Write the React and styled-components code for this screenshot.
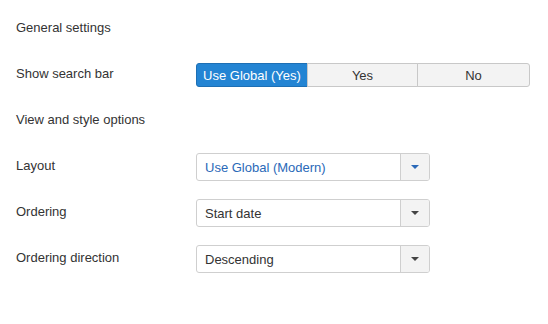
import styled, { createGlobalStyle } from "styled-components";

const GlobalStyle = createGlobalStyle`
  body {
    margin: 0;
    background: #fff;
    font-family: "Liberation Sans", Arial, sans-serif;
    font-size: 13px;
    color: #333;
  }
`;

const App = () => {
  return (
    <Page>
      <GlobalStyle />
      <Row>
        <Label>General settings</Label>
      </Row>
      <Row>
        <Label>Show search bar</Label>
        <Toggle>
          <ToggleButton $active>Use Global (Yes)</ToggleButton>
          <ToggleButton>Yes</ToggleButton>
          <ToggleButton>No</ToggleButton>
        </Toggle>
      </Row>
      <Row>
        <Label>View and style options</Label>
      </Row>
      <Row>
        <Label>Layout</Label>
        <Select $global value="Use Global (Modern)" />
      </Row>
      <Row>
        <Label>Ordering</Label>
        <Select value="Start date" />
      </Row>
      <Row>
        <Label>Ordering direction</Label>
        <Select value="Descending" />
      </Row>
    </Page>
  );
};

const Select = ({ value, $global }) => (
  <SelectBox>
    <SelectValue $global={$global}>{value}</SelectValue>
    <SelectArrow>
      <Caret $global={$global} />
    </SelectArrow>
  </SelectBox>
);

export default App;

const Page = styled.div`
  padding: 5px 0 0 16px;
`;
const Row = styled.div`
  display: flex;
  align-items: center;
  height: 46px;
`;
const Label = styled.div`
  width: 180px;
  flex-shrink: 0;
  line-height: 18px;
`;
const Toggle = styled.div`
  display: flex;
  margin-top: 2px;
`;
const ToggleButton = styled.div`
  width: 111px;
  height: 24px;
  box-sizing: border-box;
  display: flex;
  align-items: center;
  justify-content: center;
  background: ${(p) => (p.$active ? "#2384d3" : "#f3f3f3")};
  color: ${(p) => (p.$active ? "#fff" : "#333")};
  border: 1px solid ${(p) => (p.$active ? "#1d6fb4" : "#c8c8c8")};
  margin-left: -1px;
  &:first-child {
    margin-left: 0;
    width: 112px;
    border-radius: 3px 0 0 3px;
  }
  &:last-child {
    width: 113px;
    border-radius: 0 3px 3px 0;
  }
`;
const SelectBox = styled.div`
  display: flex;
  width: 234px;
  height: 28px;
  box-sizing: border-box;
  border: 1px solid #cfcfcf;
  border-radius: 3px;
  margin-top: 2px;
  overflow: hidden;
`;
const SelectValue = styled.div`
  flex: 1;
  display: flex;
  align-items: center;
  padding-left: 8px;
  color: ${(p) => (p.$global ? "#2a69b8" : "#333")};
`;
const SelectArrow = styled.div`
  width: 28px;
  display: flex;
  align-items: center;
  justify-content: center;
  background: #f3f3f3;
  border-left: 1px solid #cfcfcf;
`;
const Caret = styled.span`
  width: 0;
  height: 0;
  border-left: 4px solid transparent;
  border-right: 4px solid transparent;
  border-top: 4px solid ${(p) => (p.$global ? "#2a69b8" : "#444")};
`;
